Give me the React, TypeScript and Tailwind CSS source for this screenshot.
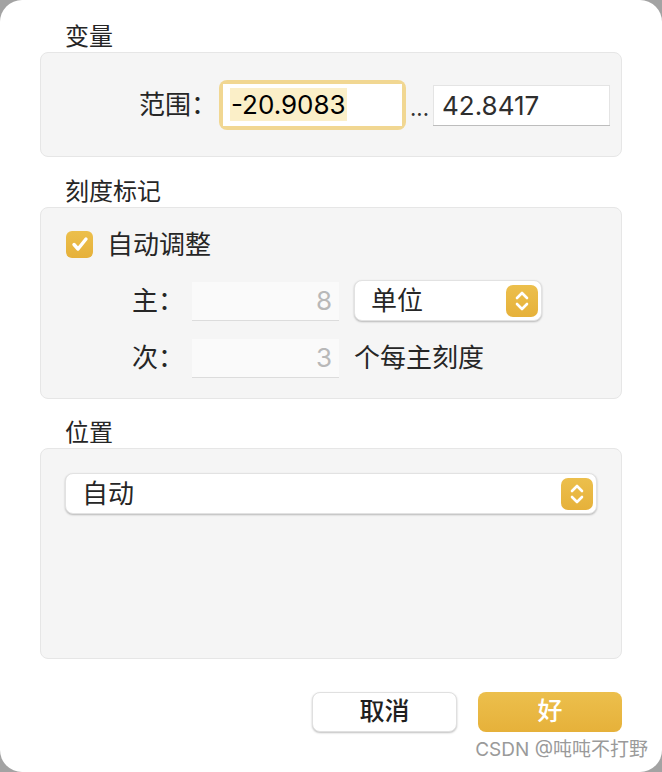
import React from 'react'

const cjk = { fontFamily: 'Inter, "Noto Sans CJK SC", sans-serif' }

function Stepper() {
  return (
    <div className="w-[32px] h-[32px] rounded-[7px] bg-gradient-to-b from-[#ecbf4c] to-[#e6b13a] flex items-center justify-center">
      <svg width="16" height="24" viewBox="0 0 16 24" fill="none" stroke="white" strokeWidth="2.6" strokeLinecap="round" strokeLinejoin="round">
        <path d="M3 9 L8 4 L13 9" />
        <path d="M3 15 L8 20 L13 15" />
      </svg>
    </div>
  )
}

function Select({ label, className }: { label: string; className?: string }) {
  return (
    <div
      className={`h-[41px] bg-white rounded-[8px] border border-[#e2e2e2] shadow-[0_1px_2px_rgba(0,0,0,0.25)] flex items-center justify-between pl-[16px] pr-[3px] ${className ?? ''}`}
    >
      <span className="text-[26px] text-[#262626]">{label}</span>
      <Stepper />
    </div>
  )
}

function DisabledInput({ value }: { value: string }) {
  return (
    <div className="w-[147px] h-[38px] bg-[#fafafa] shadow-[0_1px_0_#dcdcdc] flex items-center justify-end pr-[7px] text-[26px] text-[#b8b8b8]">
      {value}
    </div>
  )
}

export default function App() {
  return (
    <div className="w-[662px] h-[772px] bg-[#a3a3a3]" style={cjk}>
      <div className="relative w-full h-full bg-white rounded-[22px] px-[40px] pt-[21px] text-[#262626]">
        {/* 变量 */}
        <div className="h-[31px] pl-[25px] text-[24px] leading-[31px]">变量</div>
        <div className="h-[105px] bg-[#f5f5f5] border border-[#e6e6e6] rounded-[8px] flex items-center pl-[98px]">
          <span className="text-[26px] w-[80px]">范围：</span>
          <div className="w-[187px] h-[50px] rounded-[8px] bg-[#f1d792] p-[4px]">
            <div className="w-full h-full bg-white flex items-center pl-[7px]">
              <span className="bg-[#fbefc8] text-[26px] leading-[33px] text-black px-[1px]">-20.9083</span>
            </div>
          </div>
          <span className="text-[22px] w-[27px] text-center text-[#333] leading-none pt-[6px]">...</span>
          <div className="w-[177px] h-[40px] bg-white border-t border-x border-[#e4e4e4] shadow-[0_1px_0_#bdbdbd] flex items-center pl-[8px] text-[26px] text-[#2e2e2e]">
            42.8417
          </div>
        </div>

        {/* 刻度标记 */}
        <div className="h-[30px] mt-[20px] pl-[25px] text-[24px] leading-[30px]">刻度标记</div>
        <div className="h-[192px] bg-[#f5f5f5] border border-[#e6e6e6] rounded-[8px] pt-[22px] pl-[25px]">
          <div className="flex items-center h-[28px]">
            <div className="w-[27px] h-[27px] rounded-[6px] bg-gradient-to-b from-[#ecbf4c] to-[#e6b13a] flex items-center justify-center">
              <svg width="18" height="16" viewBox="0 0 18 16" fill="none" stroke="white" strokeWidth="3.4" strokeLinecap="round" strokeLinejoin="round">
                <path d="M3 8.5 L7 13 L15 3" />
              </svg>
            </div>
            <span className="ml-[14px] text-[26px]">自动调整</span>
          </div>
          <div className="flex items-center mt-[22px] pl-[66px]">
            <span className="w-[60px] text-[26px]">主：</span>
            <DisabledInput value="8" />
            <Select label="单位" className="ml-[15px] w-[188px]" />
          </div>
          <div className="flex items-center mt-[17px] pl-[66px]">
            <span className="w-[60px] text-[26px]">次：</span>
            <DisabledInput value="3" />
            <span className="ml-[15px] text-[26px]">个每主刻度</span>
          </div>
        </div>

        {/* 位置 */}
        <div className="h-[30px] mt-[19px] pl-[25px] text-[24px] leading-[30px]">位置</div>
        <div className="h-[211px] bg-[#f5f5f5] border border-[#e6e6e6] rounded-[8px] pt-[24px] px-[24px]">
          <Select label="自动" />
        </div>

        <div className="flex justify-end gap-[21px] mt-[33px]">
          <button className="w-[145px] h-[40px] bg-white rounded-[8px] border border-[#e0e0e0] shadow-[0_1px_2px_rgba(0,0,0,0.25)] text-[25px] font-medium text-[#1f1f1f]">
            取消
          </button>
          <button className="w-[144px] h-[40px] rounded-[8px] bg-gradient-to-b from-[#ecbf4c] to-[#e6b13a] text-[25px] font-medium text-white">
            好
          </button>
        </div>

        <div className="absolute right-[14px] bottom-[8px] text-[19px] text-[#9a9a9a]">CSDN @吨吨不打野</div>
      </div>
    </div>
  )
}
